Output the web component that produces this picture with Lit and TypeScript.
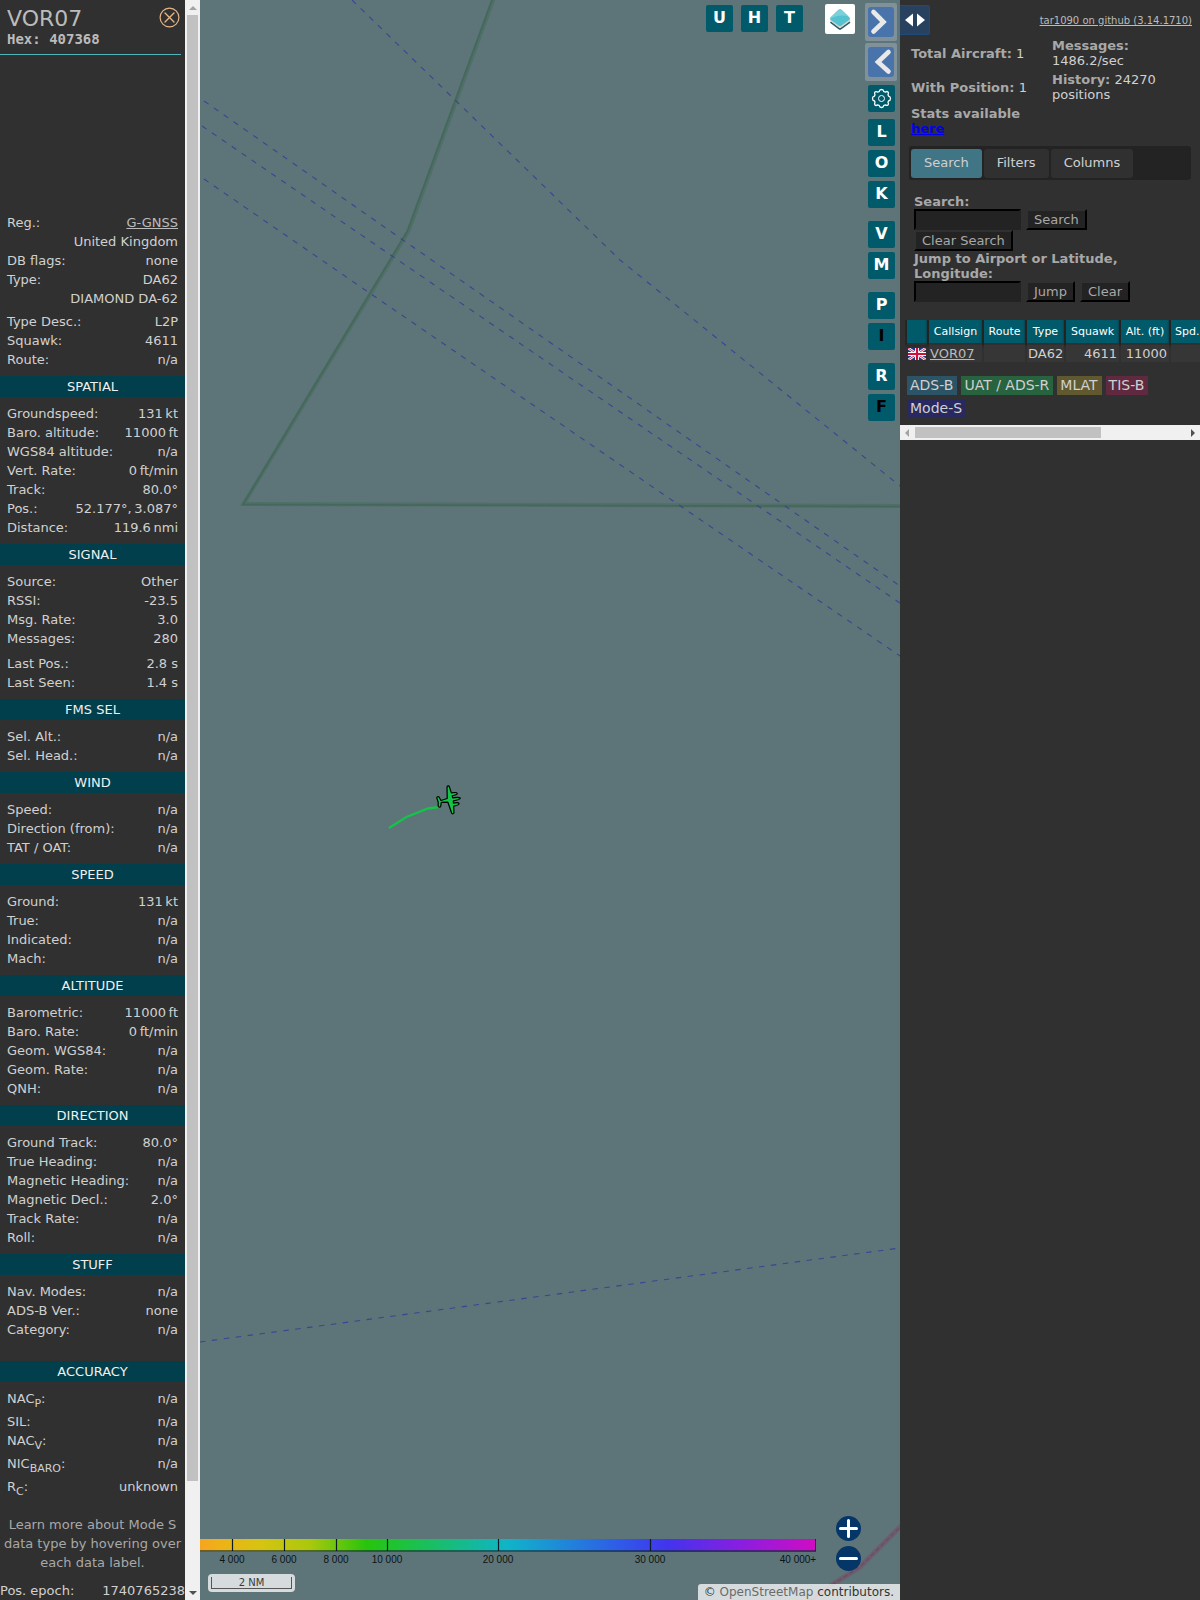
import { LitElement, html, svg, css, nothing } from "lit";
import { customElement, property } from "lit/decorators.js";

type Row = { label?: unknown; value: unknown; kind?: string };
type Section = { title?: string; rows: Row[]; tall?: boolean };

const r = (label: unknown, value: unknown, kind = ""): Row => ({ label, value, kind });
const sub = (base: string, small: string) => html`${base}<sub>${small}</sub>:`;

const sections: Section[] = [
  {
    rows: [
      r("Reg.:", html`<a href="#reg">G-GNSS</a>`),
      r("", "United Kingdom"),
      r("DB flags:", "none"),
      r("Type:", "DA62"),
      r("", "DIAMOND DA-62"),
      r("Type Desc.:", "L2P", "gap"),
      r("Squawk:", "4611"),
      r("Route:", "n/a"),
    ],
  },
  {
    title: "SPATIAL",
    rows: [
      r("Groundspeed:", "131\u202fkt"),
      r("Baro. altitude:", "11000\u202fft"),
      r("WGS84 altitude:", "n/a"),
      r("Vert. Rate:", "0\u202fft/min"),
      r("Track:", "80.0°"),
      r("Pos.:", "52.177°,\u202f3.087°"),
      r("Distance:", "119.6\u202fnmi"),
    ],
  },
  {
    title: "SIGNAL",
    rows: [
      r("Source:", "Other"),
      r("RSSI:", "-23.5"),
      r("Msg. Rate:", "3.0"),
      r("Messages:", "280"),
      r("Last Pos.:", "2.8 s", "widegap"),
      r("Last Seen:", "1.4 s"),
    ],
  },
  { title: "FMS SEL", rows: [r("Sel. Alt.:", "n/a"), r("Sel. Head.:", "n/a")] },
  { title: "WIND", rows: [r("Speed:", "n/a"), r("Direction (from):", "n/a"), r("TAT / OAT:", "n/a")] },
  { title: "SPEED", rows: [r("Ground:", "131\u202fkt"), r("True:", "n/a"), r("Indicated:", "n/a"), r("Mach:", "n/a")] },
  {
    title: "ALTITUDE",
    rows: [
      r("Barometric:", "11000\u202fft"),
      r("Baro. Rate:", "0\u202fft/min"),
      r("Geom. WGS84:", "n/a"),
      r("Geom. Rate:", "n/a"),
      r("QNH:", "n/a"),
    ],
  },
  {
    title: "DIRECTION",
    rows: [
      r("Ground Track:", "80.0°"),
      r("True Heading:", "n/a"),
      r("Magnetic Heading:", "n/a"),
      r("Magnetic Decl.:", "2.0°"),
      r("Track Rate:", "n/a"),
      r("Roll:", "n/a"),
    ],
  },
  { title: "STUFF", tall: true, rows: [r("Nav. Modes:", "n/a"), r("ADS-B Ver.:", "none"), r("Category:", "n/a")] },
  {
    title: "ACCURACY",
    rows: [
      r(sub("NAC", "P"), "n/a", "sub"),
      r("SIL:", "n/a"),
      r(sub("NAC", "V"), "n/a", "sub"),
      r(sub("NIC", "BARO"), "n/a", "sub"),
      r(sub("R", "C"), "unknown", "sub"),
    ],
  },
];

@customElement("scroll-rail")
class ScrollRail extends LitElement {
  @property({ type: Boolean, reflect: true }) horizontal = false;
  static styles = css`
    :host { display: flex; flex-direction: column; width: 15px; background: #f0f0f0; }
    :host([horizontal]) { flex-direction: row; width: auto; height: 15px; }
    svg { width: 15px; height: 15px; flex: none; display: block; }
    .track { flex: 1; display: flex; flex-direction: column; padding: 0 2px; }
    .thumb { background: #c1c1c1; flex: 1466; }
    .rest { flex: 104; }
    :host([horizontal]) .track { flex-direction: row; padding: 2px 0; }
    :host([horizontal]) .thumb { flex: 186; }
    :host([horizontal]) .rest { flex: 84; }
  `;
  render() {
    const h = this.horizontal;
    return html`
      <svg viewBox="0 0 15 15"><path fill="#a3a3a3" d=${h ? "M9 4v8l-4-4z" : "M4 10h8l-4-4z"} /></svg>
      <div class="track"><div class="thumb"></div><div class="rest"></div></div>
      <svg viewBox="0 0 15 15"><path fill="#505050" d=${h ? "M6 4v8l4-4z" : "M4 6h8l-4 4z"} /></svg>
    `;
  }
}

@customElement("aircraft-panel")
class AircraftPanel extends LitElement {
  static styles = css`
    :host { display: flex; background: #303030; color: #d0d0d0; font: 13px/19px "DejaVu Sans", sans-serif; height: 100%; overflow: hidden; }
    .body { flex: 1; min-width: 0; display: flex; flex-direction: column; }
    header { flex: none; display: flex; justify-content: space-between; height: 54px; box-sizing: border-box; padding: 7px 5px 0 7px; color: #bbb; }
    h1 { font-size: 22px; line-height: 24px; font-weight: 400; margin: 0; }
    .hex { font: bold 14px/17px "DejaVu Sans Mono", monospace; }
    .close { border: 0; padding: 0; background: none; width: 21px; height: 21px; display: block; }
    .close svg { display: block; }
    .rule { height: 1px; flex: none; background: #4fb5bb; margin-right: 4px; }
    .photo { height: 158px; flex: none; }
    h2 { margin: 0; font-size: 13px; line-height: 21px; font-weight: 400; text-align: center; background: #003f4b; color: #f0f0f0; }
    dl { margin: 0; padding: 7px; }
    .first { padding-top: 0; }
    .tall { padding-bottom: 22px; }
    .row { display: flex; justify-content: space-between; height: 19px; white-space: nowrap; }
    .gap { margin-top: 4px; }
    .widegap { margin-top: 6px; }
    .sub { height: 23px; }
    dt, dd { margin: 0; }
    sub { font-size: 11px; line-height: 0; vertical-align: sub; }
    a { color: #bbb; }
    .note { margin: 8px 0 9px; text-align: center; color: #a8a8a8; }
    .epoch { display: flex; justify-content: space-between; }
  `;
  render() {
    return html`
      <div class="body">
        <header>
          <div><h1>VOR07</h1><div class="hex">Hex: 407368</div></div>
          <button class="close" aria-label="Close">
            <svg width="21" height="21" viewBox="0 0 21 21" fill="none" stroke="#e5b587">
              <circle cx="10.5" cy="10.5" r="9.4" stroke-width="1.2" /><path d="M6 6l9 9M15 6l-9 9" stroke-width="1.4" stroke-linecap="round" />
            </svg>
          </button>
        </header>
        <div class="rule"></div>
        <div class="photo"></div>
        ${sections.map(
          (s) => html`
            ${s.title ? html`<h2>${s.title}</h2>` : nothing}
            <dl class="${s.tall ? "tall" : ""} ${s.title ? "" : "first"}">
              ${s.rows.map((x) => html`<div class="row ${x.kind}"><dt>${x.label}</dt><dd>${x.value}</dd></div>`)}
            </dl>`
        )}
        <p class="note">Learn more about Mode S data type by hovering over each data label.</p>
        <div class="epoch"><span>Pos. epoch:</span><span>1740765238</span></div>
      </div>
      <scroll-rail></scroll-rail>
    `;
  }
}

const ticks: [number, string][] = [[32, "4 000"], [84, "6 000"], [136, "8 000"], [187, "10 000"], [298, "20 000"], [450, "30 000"]];
const airways = [
  "M152 0L420 260L700 486",
  "M4 101L203 240L585 506L700 586",
  "M2 126L192 256L700 603",
  "M4 179L171 294L479 505L700 656",
  "M0 1342L700 1248",
];

@customElement("map-view")
class MapView extends LitElement {
  static styles = css`
    :host { display: block; position: relative; overflow: hidden; background: #5d7479; font-family: "DejaVu Sans", sans-serif; height: 100%; }
    .canvas { position: absolute; left: 0; top: 0; width: 700px; height: 1600px; }
    .letters { position: absolute; top: 5px; right: 97px; display: flex; gap: 8px; }
    .layers { position: absolute; top: 4px; right: 45px; width: 30px; height: 30px; padding: 0; border: 0; border-radius: 2px; background: #fff; }
    .side { position: absolute; top: 3px; right: 3px; width: 32px; display: flex; flex-direction: column; align-items: center; }
    .key { width: 27px; height: 27px; border: 0; border-radius: 2px; background: #005a6a; color: #fff; font: bold 16px/26px "DejaVu Sans", sans-serif; padding: 0 0 1px; margin: 0; }
    .off { color: #000; }
    .group { display: flex; flex-direction: column; gap: 4px; margin-bottom: 13px; padding-left: 1px; }
    .gear { margin: 2px 0 7px 1px; padding: 0; }
    .nav { width: 32px; height: 38px; border: 0; border-radius: 2px; padding: 0; background: #80919a; margin-bottom: 2px; }
    svg { display: block; }
    .legend { position: absolute; left: 0; right: 84px; bottom: 36px; }
    .bar { height: 13px; box-sizing: border-box; border-bottom: 2px solid rgba(20, 40, 50, 0.6); border-right: 1px solid #222; background: linear-gradient(to right, #f5a51e 0, #eeb118 3%, #d6c410 10%, #a9c80d 18%, #28c40c 27%, #1ec334 32%, #10b4c8 50%, #2e5ce8 68%, #4234ee 76%, #8a1ee0 88%, #d00cc4 100%); }
    .marks { position: absolute; left: 0; top: 0; width: 100%; height: 26px; overflow: visible; }
    .labels { height: 12px; }
    text { font: 10px "Liberation Sans", sans-serif; fill: #0c1416; text-anchor: middle; }
    .scale { position: absolute; left: 8px; bottom: 8px; padding: 3px; border-radius: 4px; background: rgba(255, 255, 255, 0.75); }
    .scale div { width: 79px; height: 11px; border: 1px solid #555; border-top: 0; text-align: center; font-size: 10px; line-height: 11px; color: #3a3a3a; }
    .attr { position: absolute; right: 0; bottom: 0; padding: 0 6px; height: 16px; line-height: 16px; font-size: 12px; border-radius: 3px 0 0; background: rgba(255, 255, 255, 0.75); color: #333; white-space: nowrap; }
    .attr a { color: #6b6b6b; text-decoration: none; }
    .zoom { position: absolute; right: 39px; bottom: 29px; display: flex; flex-direction: column; gap: 5px; }
    .zoom button { border: 0; padding: 0; background: none; width: 25px; height: 25px; }
  `;
  key(c: string, off = false) {
    return html`<button class="key ${off ? "off" : ""}">${c}</button>`;
  }
  render() {
    return html`
      <svg class="canvas" viewBox="0 0 700 1600" fill="none">
        <path d="M294.500 -4L208.500 231L43.500 504L700 506" stroke="#476b5d" stroke-opacity=".55" stroke-width="4" />
        <path d="M293.500 -4L207.500 231L43 504.500L700 506.500" stroke="#3f6552" stroke-opacity=".7" stroke-width="1.6" />
        ${airways.map((d) => svg`<path d=${d} stroke="#3c4590" stroke-dasharray="5.500 6.500" stroke-width="1.1" />`)}
        <path d="M704 1523L660 1567L630 1586L606 1604" stroke="#6f5d6e" stroke-width="5" />
        <path d="M704 1523L660 1567L630 1586L606 1604" stroke="#624f62" stroke-width="1.2" stroke-dasharray="5 2" />
        <path d="M189 828L206.500 817L228 808.500L239 807" stroke="#14c448" stroke-width="2.4" />
        <g transform="translate(249.500 800) rotate(80)">
          <path
            d="M0-11C1-10.500 1.500-8 1.600-3.600L3.700-3.400C3.700-7 4.200-8.800 5.200-8.800S6.700-7 6.700-3.100L13-2.200C14.500-1.900 14.500-.2 13.200.2L1.900 2L1 8.500L4.800 9.800C5.700 10.500 5.300 12 4.300 12.200L0 11.500L-4.300 12.200C-5.300 12-5.700 10.500-4.800 9.800L-1 8.500L-1.900 2L-13.200.2C-14.500-.2-14.500-1.900-13-2.200L-6.700-3.100C-6.700-7-6.200-8.800-5.200-8.800S-3.700-7-3.700-3.400L-1.600-3.600C-1.500-8-1-10.500 0-11Z"
            fill="#14c448" stroke="#000" stroke-width="1.2" stroke-linejoin="round" />
        </g>
      </svg>
      <div class="letters">${["U", "H", "T"].map((c) => this.key(c))}</div>
      <button class="layers" aria-label="Layers">
        <svg width="30" height="30" viewBox="0 0 30 30">
          <path d="M5.500 18L14 24.500Q15 25.200 16 24.500L25 18" fill="none" stroke="#2c5e66" stroke-width="1.6" />
          <path d="M5.500 16L14 22.500Q15 23.200 16 22.500L25 16" fill="none" stroke="#d4d4d4" stroke-width="1.6" />
          <path d="M5.500 13.500Q4.500 14.500 5.500 15.800L13.500 21.500Q15 22.500 16.500 21.500L24.500 15.800Q25.500 14.500 24.500 13.500L16.500 5.800Q15 4.500 13.500 5.800Z" fill="#55c2cf" />
          <path d="M5.500 13.500L13.500 5.800Q15 4.500 16.500 5.800L23 12Q12 10 5 15Z" fill="#7bd0da" />
        </svg>
      </button>
      <div class="side">
        ${["Expand", "Collapse"].map(
          (n, i) => html`<button class="nav" aria-label=${n}>
            <svg width="32" height="38" viewBox="0 0 32 38">
              <rect x="3" y="4" width="26" height="30" rx="3" fill="#4974ab" />
              <path d=${i ? "M23.500 9L13 19L23.500 28.500" : "M8.500 9L18.500 19L8.500 28.500"} fill="none" stroke="#e9e9e9" stroke-width="4.600" stroke-linecap="round" />
            </svg>
          </button>`
        )}
        <button class="key gear" aria-label="Settings">
          <svg width="27" height="27" viewBox="0 0 27 27" fill="none" stroke="#fff">
            <path d="M13.500 4.500Q15.500 4.500 15.800 6.500L17.300 7.100Q19.100 6 20 7T20 9.800L20.600 11.200Q22.500 11.500 22.500 13.500T20.600 15.800L20 17.200Q21 19.100 20 20T17.300 19.900L15.800 20.500Q15.500 22.500 13.500 22.500T11.200 20.500L9.700 19.900Q7.900 21 7 20T7 17.200L6.400 15.800Q4.500 15.500 4.500 13.500T6.400 11.200L7 9.800Q6 7.900 7 7T9.700 7.100L11.200 6.500Q11.500 4.500 13.500 4.500Z" stroke-width="1.300" />
            <circle cx="13.500" cy="13.500" r="3" stroke-width="1" />
          </svg>
        </button>
        <div class="group">${this.key("L")}${this.key("O")}${this.key("K")}</div>
        <div class="group">${this.key("V")}${this.key("M")}</div>
        <div class="group">${this.key("P")}${this.key("I", true)}</div>
        <div class="group">${this.key("R")}${this.key("F", true)}</div>
      </div>
      <div class="legend">
        <div class="bar"></div>
        <div class="labels"></div>
        <svg class="marks">
          ${ticks.map(([x, t]) => svg`<path d="M${x + 0.5} 0v12" stroke="#0b1a24" stroke-width="1.200"/><text x=${x} y="24">${t}</text>`)}
          <text x="598" y="24">40 000+</text>
        </svg>
      </div>
      <div class="scale"><div>2 NM</div></div>
      <div class="zoom">
        ${["Zoom in", "Zoom out"].map(
          (n, i) => html`<button aria-label=${n}>
            <svg width="25" height="25" viewBox="0 0 25 25"><circle cx="12.500" cy="12.500" r="12.500" fill="#043668" /><path d=${i ? "M4.500 12.500h16" : "M4.500 12.500h16M12.500 4.500v16"} stroke="#fff" stroke-width="3" stroke-linecap="round" /></svg>
          </button>`
        )}
      </div>
      <div class="attr">© <a href="#osm">OpenStreetMap</a> contributors.</div>
    `;
  }
}

@customElement("list-panel")
class ListPanel extends LitElement {
  static styles = css`
    :host { display: block; background: #303030; color: #d0d0d0; font: 13px/15px "DejaVu Sans", sans-serif; overflow: hidden; height: 100%; }
    b, label { font-weight: bold; color: #a8a8a8; }
    .top { display: flex; justify-content: space-between; height: 38px; box-sizing: border-box; padding: 5px 8px 0 0; }
    .top a { font-size: 10px; line-height: 31px; color: #bbb; }
    .toggle { width: 30px; height: 30px; padding: 0; border: 1px solid #1e4a7c; border-left: 0; border-radius: 0 2px 2px 0; background: #28415f; }
    .toggle svg { display: block; }
    .stats { display: grid; grid-template-columns: 137fr 136fr; column-gap: 4px; row-gap: 4px; padding: 0 12px 0 11px; align-items: center; }
    .stats a { color: #0000ee; }
    .tabs { display: flex; gap: 2px; margin: 10px 9px 14px; padding: 3px 2px 2px; border-radius: 3px; background: #232323; }
    .tabs button { height: 29px; padding: 0 13px 2px; border: 0; border-radius: 3px; background: #303030; color: #d0d0d0; font: 13px "DejaVu Sans", sans-serif; }
    .tabs .on { background: #407585; }
    form { padding: 0 14px 18px; }
    label { display: block; }
    .line { display: flex; flex-wrap: wrap; column-gap: 5px; }
    input { width: 107px; height: 21px; box-sizing: border-box; border: 2px solid; border-color: #000 #232323 #232323 #000; background: #232323; color: #d0d0d0; }
    form button { height: 21px; box-sizing: border-box; padding: 0 6px; border: 2px solid #000; border-color: #303030 #000 #000 #303030; background: #232323; color: #a8a8a8; font: 13px/15px "DejaVu Sans", sans-serif; }
    .wrap { margin-left: 5px; overflow: hidden; }
    table { border-spacing: 2px 0; border-collapse: separate; width: 366px; table-layout: fixed; background: #303030; }
    th { height: 23px; padding: 0; background: #005a6a; color: #fff; font-size: 11px; font-weight: 400; box-shadow: 0 0 2px 2px #242424; }
    td { padding: 0 2px; height: 17px; line-height: 17px; border-top: 2px solid #303030; background: #363636; text-align: right; white-space: nowrap; }
    td a { color: #bbb; }
    td.l { text-align: left; padding: 0 1px; }
    .flag { padding: 0 1px; background: none; }
    .flag svg { display: block; }
    .keys { display: flex; flex-wrap: wrap; gap: 4px; padding: 14px 7px 7px; font-size: 14px; line-height: 19px; }
    .keys span { padding: 0 4px 0 3px; }
    .adsb { background: #2b5566; }
    .uat { background: #28633f; }
    .mlat { background: #60592f; }
    .tisb { background: #60293f; }
    .modes { background: #292962; }
    .c0 { width: 20px; } .c1 { width: 53px; } .c2 { width: 41px; } .c3 { width: 37px; } .c4 { width: 53px; } .c5 { width: 48px; } .c6 { width: 98px; }
    th.spd { text-align: left; padding-left: 4px; }
  `;
  render() {
    return html`
      <div class="top">
        <button class="toggle" aria-label="Toggle width">
          <svg width="29" height="28" viewBox="0 0 29 28" fill="#fff"><path d="M13 7.500v13L5 14zM17 7.500v13L25 14z" /></svg>
        </button>
        <a href="#github">tar1090 on github (3.14.1710)</a>
      </div>
      <div class="stats">
        <div><b>Total Aircraft:</b> 1</div>
        <div><b>Messages:</b> 1486.2/sec</div>
        <div><b>With Position:</b> 1</div>
        <div><b>History:</b> 24270 positions</div>
        <b>Stats available <a href="#stats">here</a></b>
      </div>
      <nav class="tabs"><button class="on">Search</button><button>Filters</button><button>Columns</button></nav>
      <form @submit=${(e: Event) => e.preventDefault()}>
        <label for="q">Search:</label>
        <div class="line"><input id="q" /><button>Search</button><button>Clear Search</button></div>
        <label for="j">Jump to Airport or Latitude, Longitude:</label>
        <div class="line"><input id="j" /><button>Jump</button><button>Clear</button></div>
      </form>
      <div class="wrap">
        <table>
          <colgroup>${[0, 1, 2, 3, 4, 5, 6].map((i) => html`<col class="c${i}" />`)}</colgroup>
          <thead><tr><th></th><th>Callsign</th><th>Route</th><th>Type</th><th>Squawk</th><th>Alt. (ft)</th><th class="spd">Spd.</th></tr></thead>
          <tbody><tr>
            <td class="flag">
              <svg width="18" height="12" viewBox="0 0 18 12"><path fill="#1c3a8c" d="M0 0h18v12H0z" /><path d="M0 0L18 12M18 0L0 12" stroke="#fff" stroke-width="2.600" /><path d="M0 0L18 12M18 0L0 12" stroke="#d0103a" stroke-width=".9" /><path d="M9 0v12M0 6h18" stroke="#fff" stroke-width="4" /><path d="M9 0v12M0 6h18" stroke="#d0103a" stroke-width="2.200" /></svg>
            </td>
            <td class="l"><a href="#VOR07">VOR07</a></td><td></td><td class="l">DA62</td><td>4611</td><td>11000</td><td></td>
          </tr></tbody>
        </table>
      </div>
      <div class="keys"><span class="adsb">ADS-B</span><span class="uat">UAT / ADS-R</span><span class="mlat">MLAT</span><span class="tisb">TIS-B</span><span class="modes">Mode-S</span></div>
      <scroll-rail horizontal></scroll-rail>
    `;
  }
}

@customElement("app-root")
class AppRoot extends LitElement {
  static styles = css`
    :host { display: grid; grid-template-columns: 200px 1fr 300px; grid-template-rows: 100vh; overflow: hidden; background: #303030; }
  `;
  render() {
    return html`<aircraft-panel></aircraft-panel><map-view></map-view><list-panel></list-panel>`;
  }
}
